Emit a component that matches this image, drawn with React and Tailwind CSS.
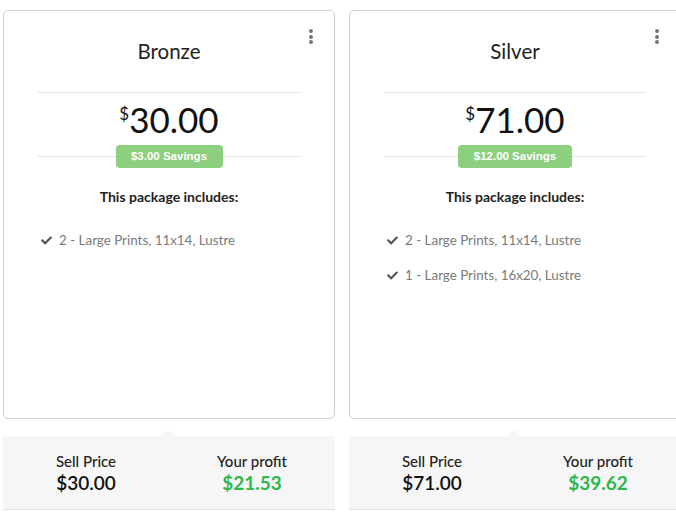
import React from "react";
import { FaCheck } from "react-icons/fa";

const packages = [
  {
    name: "Bronze",
    price: "30.00",
    savings: "$3.00 Savings",
    badgeW: "w-[107px]",
    items: ["2 - Large Prints, 11x14, Lustre"],
    sell: "$30.00",
    profit: "$21.53",
  },
  {
    name: "Silver",
    price: "71.00",
    savings: "$12.00 Savings",
    badgeW: "w-[114px]",
    items: ["2 - Large Prints, 11x14, Lustre", "1 - Large Prints, 16x20, Lustre"],
    sell: "$71.00",
    profit: "$39.62",
  },
];

const PackageColumn = ({ pkg }) => (
  <div className="w-[332px] shrink-0 flex flex-col">
    {/* ── Carte ── */}
    <div className="relative h-[409px] bg-white border border-[#cfcfcf] rounded-[5px]">
      <button className="absolute top-[16px] right-[19px] flex flex-col gap-[1.5px] p-0.5">
        <span className="w-[4px] h-[4px] rounded-full bg-[#777]" />
        <span className="w-[4px] h-[4px] rounded-full bg-[#777]" />
        <span className="w-[4px] h-[4px] rounded-full bg-[#777]" />
      </button>

      <h2 className="pt-[26px] text-center text-[20.5px] leading-[29px] text-[#222]">{pkg.name}</h2>
      <div className="mx-[34px] mt-[26px] border-t border-[#e6e6e6]" />

      <div className="mt-[6px] flex justify-center items-start text-[#111]">
        <span className="text-[17px] leading-[24px] mt-[3px]">$</span>
        <span className="text-[35px] leading-[40px]">{pkg.price}</span>
      </div>

      <div className="relative mx-[34px] mt-[6px] h-[23px] flex justify-center">
        <div className="absolute left-0 right-0 top-[11px] border-t border-[#e6e6e6]" />
        <span
          className={`relative ${pkg.badgeW} h-[23px] flex items-center justify-center rounded-[4px] bg-[#8ccf7e] text-white text-[11.5px] font-bold`}
          style={{ fontFamily: '"Liberation Sans", Arial, sans-serif' }}
        >
          {pkg.savings}
        </span>
      </div>

      <p className="mt-[19px] text-center text-[14px] leading-[20px] font-bold text-[#222]">
        This package includes:
      </p>

      <ul className="mt-[23px] pl-[37px] flex flex-col gap-[15px]">
        {pkg.items.map((item) => (
          <li key={item} className="flex items-center gap-[7px] text-[13.4px] leading-[20px] text-[#7a7a7a]">
            <FaCheck className="w-[11px] h-[11px] text-[#555]" />
            {item}
          </li>
        ))}
      </ul>
    </div>

    {/* ── Prix / profit ── */}
    <div className="relative mt-[17px] h-[74px] bg-[#f6f6f6] border-b border-[#e2e2e2] grid grid-cols-2 items-center">
      <span className="absolute -top-[6px] left-[158px] w-0 h-0 border-x-[7px] border-x-transparent border-b-[6px] border-b-[#f6f6f6]" />
      <div className="text-center">
        <p className="text-[15px] leading-[20px] font-medium text-[#222]">Sell Price</p>
        <p className="text-[19px] leading-[24px] font-semibold text-[#111]">{pkg.sell}</p>
      </div>
      <div className="text-center">
        <p className="text-[15px] leading-[20px] font-medium text-[#222]">Your profit</p>
        <p className="text-[19px] leading-[24px] font-bold text-[#2db84c]">{pkg.profit}</p>
      </div>
    </div>
  </div>
);

export default function App() {
  return (
    <div
      className="w-[676px] h-[515px] overflow-hidden bg-white flex gap-[14px] pl-[3px] pt-[10px]"
      style={{ fontFamily: "Lato, 'Noto Sans', sans-serif" }}
    >
      {packages.map((pkg) => (
        <PackageColumn key={pkg.name} pkg={pkg} />
      ))}
    </div>
  );
}
